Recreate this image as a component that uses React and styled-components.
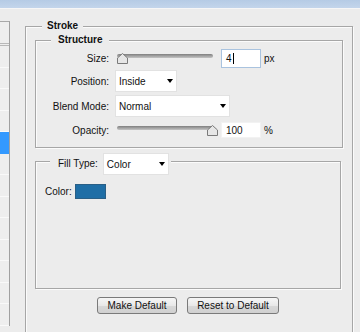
import React from "react";
import styled, { createGlobalStyle } from "styled-components";

const GlobalStyle = createGlobalStyle`
  html, body {
    margin: 0;
    padding: 0;
    background: #ececec;
  }
  body {
    font-family: "Liberation Sans", Arial, sans-serif;
    font-size: 10px;
    color: #111;
  }
`;

const sideRows = [0, 1, 2, 3, 4, 5, 6, 7, 8, 9, 10, 11, 12];

function Slider({ value, max }) {
    const left = -1 + (value / max) * 91;
    return (
        <SliderWrap>
            <Track />
            <Thumb style={{ left }} width="11" height="11" viewBox="0 0 11 11">
                <polygon
                    points="0.5,10.5 0.5,5 5.5,0.5 10.5,5 10.5,10.5"
                    fill="#e6e6e6"
                    stroke="#7a7a7a"
                />
            </Thumb>
        </SliderWrap>
    );
}

function Select({ width, value }) {
    return (
        <SelectBox $width={width}>
            <span>{value}</span>
            <Arrow />
        </SelectBox>
    );
}

export default function App() {
    return (
        <>
            <GlobalStyle />
            <TitleBar />
            <Main>
                <SideList>
                    <SideHead />
                    {sideRows.map(i => <SideRow key={i} $selected={i === 4} />)}
                </SideList>
                <Content>
                    <OuterSet>
                        <OuterLegend>Stroke</OuterLegend>
                        <StructureSet>
                            <StructureLegend>Structure</StructureLegend>
                            <Grid>
                                <Row $h={22}>
                                    <Label>Size:</Label>
                                    <Controls>
                                        <Slider value={4} max={250} />
                                        <NumberBox $h={19} $focused>
                                            4<Caret />
                                        </NumberBox>
                                        <Unit>px</Unit>
                                    </Controls>
                                </Row>
                                <Row $h={24}>
                                    <Label>Position:</Label>
                                    <Select width={62} value="Inside" />
                                </Row>
                                <Row $h={26}>
                                    <Label>Blend Mode:</Label>
                                    <Select width={115} value="Normal" />
                                </Row>
                                <Row $h={22}>
                                    <Label>Opacity:</Label>
                                    <Controls>
                                        <Slider value={100} max={100} />
                                        <NumberBox $h={16}>100</NumberBox>
                                        <Unit>%</Unit>
                                    </Controls>
                                </Row>
                            </Grid>
                        </StructureSet>
                        <FillSet>
                            <FillLegend>
                                <FillLabel>Fill Type:</FillLabel>
                                <Select width={66} value="Color" />
                            </FillLegend>
                            <FillBody>
                                <ColorRow>
                                    <span>Color:</span>
                                    <Swatch />
                                </ColorRow>
                            </FillBody>
                        </FillSet>
                        <Buttons>
                            <Button $w={80}>Make Default</Button>
                            <Button $w={92}>Reset to Default</Button>
                        </Buttons>
                    </OuterSet>
                </Content>
            </Main>
        </>
    );
}

const TitleBar = styled.div`
    height: 8px;
    background: linear-gradient(#b5cbe5, #c3d5eb);
    border-bottom: 1px solid #f6f6f6;
`

const Main = styled.div`
    display: flex;
    align-items: flex-start;
    height: 323px;
    overflow: hidden;
`

const SideList = styled.div`
    width: 9px;
    margin-top: 12px;
    border-top: 1px solid #a8a8a8;
    border-right: 1px solid #a0a0a0;
    background: #eeeeee;
`

const SideHead = styled.div`
    height: 21px;
    border-bottom: 3px double #b8b8b8;
`

const SideRow = styled.div`
    height: 20.5px;
    border-bottom: 1px solid ${p => (p.$selected ? "#3399ff" : "#f9f9f9")};
    background: ${p => (p.$selected ? "#3399ff" : "transparent")};
`

const Content = styled.div`
    flex: 1;
    margin: 11px 7px 0 15px;
`

const OuterSet = styled.fieldset`
    margin: 0;
    padding: 0 9px 40px 9px;
    border: 1px solid #a6a6a6;
    box-shadow: 1px 1px 0 #fbfbfb, inset 1px 1px 0 #fbfbfb;
    min-width: 0;
`

const OuterLegend = styled.legend`
    margin-left: 7px;
    padding: 0 5px;
    line-height: 12px;
    font-weight: bold;
    background: #ececec;
`

const StructureSet = styled.fieldset`
    margin: 2px 0 0 0;
    padding: 0 0 6px 0;
    border: 1px solid #a6a6a6;
    box-shadow: 1px 1px 0 #fbfbfb, inset 1px 1px 0 #fbfbfb;
    min-width: 0;
`

const StructureLegend = styled.legend`
    margin-left: 15px;
    padding: 0 7px;
    line-height: 12px;
    font-weight: bold;
    background: #ececec;
`

const Grid = styled.div`
    padding-top: 1px;
    display: flex;
    flex-direction: column;
`

const Row = styled.div`
    height: ${p => p.$h}px;
    display: grid;
    grid-template-columns: 73px auto;
    column-gap: 6px;
    align-items: center;
    justify-content: start;
`

const Label = styled.span`
    text-align: right;
    white-space: nowrap;
`

const Controls = styled.div`
    display: flex;
    align-items: center;
    padding-left: 2px;
`

const SliderWrap = styled.div`
    position: relative;
    width: 96px;
    height: 11px;
    margin-right: 8px;
`

const Track = styled.div`
    margin-top: 1px;
    height: 4px;
    border-radius: 2px;
    background: linear-gradient(#7f7f7f, #a9a9a9 60%, #c4c4c4);
`

const Thumb = styled.svg`
    position: absolute;
    top: 0;
    display: block;
`

const NumberBox = styled.div`
    box-sizing: border-box;
    width: 40px;
    height: ${p => p.$h}px;
    display: flex;
    align-items: center;
    padding-left: 4px;
    background: #fff;
    border: 1px solid ${p => (p.$focused ? "#a9c3df" : "#f2f2f2")};
    font-size: 10px;
`

const Caret = styled.span`
    display: inline-block;
    width: 1px;
    height: 11px;
    margin-left: 1px;
    background: #000;
`

const Unit = styled.span`
    margin-left: 3px;
`

const SelectBox = styled.div`
    box-sizing: border-box;
    width: ${p => p.$width}px;
    height: 22px;
    display: flex;
    align-items: center;
    justify-content: space-between;
    padding: 0 3px 0 3px;
    background: #fff;
    border: 1px solid #e2e2e2;
`

const Arrow = styled.span`
    width: 0;
    height: 0;
    border-left: 3.5px solid transparent;
    border-right: 3.5px solid transparent;
    border-top: 4px solid #000;
`

const FillSet = styled.fieldset`
    margin: 5px 2px 0 0;
    padding: 0;
    border: 1px solid #a6a6a6;
    box-shadow: 1px 1px 0 #fbfbfb, inset 1px 1px 0 #fbfbfb;
    min-width: 0;
`

const FillLegend = styled.legend`
    margin-left: 14px;
    padding: 0 2px 0 8px;
    height: 16px;
    display: flex;
    align-items: flex-start;
    gap: 5px;
    background: #ececec;
`

const FillLabel = styled.span`
    line-height: 21px;
`

const FillBody = styled.div`
    height: 119px;
    padding-left: 9px;
`

const ColorRow = styled.div`
    display: flex;
    align-items: center;
    gap: 3px;
    padding-top: 15px;
`

const Swatch = styled.div`
    box-sizing: border-box;
    width: 31px;
    height: 15px;
    background: #1f6ea6;
    border: 1px solid #2a5f86;
`

const Buttons = styled.div`
    display: flex;
    justify-content: center;
    gap: 10px;
    margin-top: 8px;
    padding-right: 2px;
`

const Button = styled.button`
    box-sizing: border-box;
    width: ${p => p.$w}px;
    height: 17px;
    padding: 0;
    font-family: "Liberation Sans", Arial, sans-serif;
    font-size: 10px;
    color: #111;
    border: 1px solid #7a7a7a;
    border-radius: 3px;
    background: linear-gradient(#f6f6f6, #e8e8e8 50%, #d8d8d8 51%, #d0d0d0);
`
